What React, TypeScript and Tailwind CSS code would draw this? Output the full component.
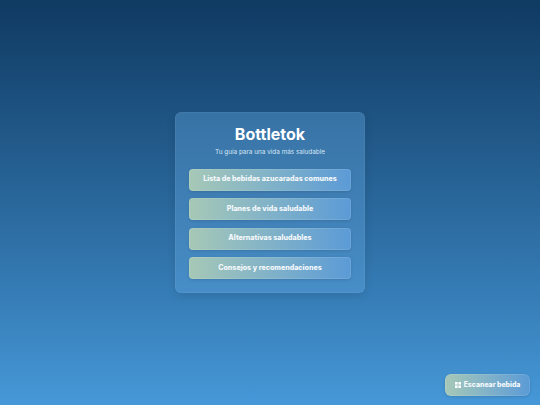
import React from "react";

const items = [
  "Lista de bebidas azucaradas comunes",
  "Planes de vida saludable",
  "Alternativas saludables",
  "Consejos y recomendaciones",
];

const btn =
  "flex items-center justify-center rounded-[4px] border border-white/10 bg-gradient-to-r from-[#a6c8b6] to-[#5b9ad6] bg-origin-border text-[#f4f8fb] font-extrabold shadow-[0_1px_3px_rgba(0,0,0,0.12)]";

export default function App() {
  return (
    <div className="relative flex h-[405px] w-[540px] items-center justify-center overflow-hidden bg-gradient-to-b from-[#0f3a62] to-[#4698d8] font-['Inter','Open_Sans',sans-serif]">
      <div className="flex h-[181px] w-[190px] flex-col items-center rounded-[6px] border border-white/5 bg-[#6aaee8]/35 px-[13px] pt-[11px] shadow-[0_3px_10px_rgba(0,0,0,0.1)]">
        <h1 className="text-[16px] leading-[20px] font-bold text-white">Bottletok</h1>
        <p className="mt-[3px] text-[6.4px] leading-[10px] text-[#d6e6f4]">Tu guía para una vida más saludable</p>
        <div className="mt-[11.5px] flex w-full flex-col gap-[7.6px]">
          {items.map((t) => (
            <div key={t} className={`${btn} h-[22px] text-[7.1px]`}>
              {t}
            </div>
          ))}
        </div>
      </div>
      <div className={`${btn} absolute right-[10px] bottom-[9px] h-[22px] w-[85px] gap-[3px] rounded-[6px] text-[6.9px]`}>
        <svg width="6" height="6" viewBox="0 0 7 7" fill="#fff">
          <rect x="0" y="0" width="3" height="3" />
          <rect x="4" y="0" width="3" height="3" />
          <rect x="0" y="4" width="3" height="3" />
          <rect x="4" y="4" width="3" height="3" />
        </svg>
        Escanear bebida
      </div>
    </div>
  );
}
